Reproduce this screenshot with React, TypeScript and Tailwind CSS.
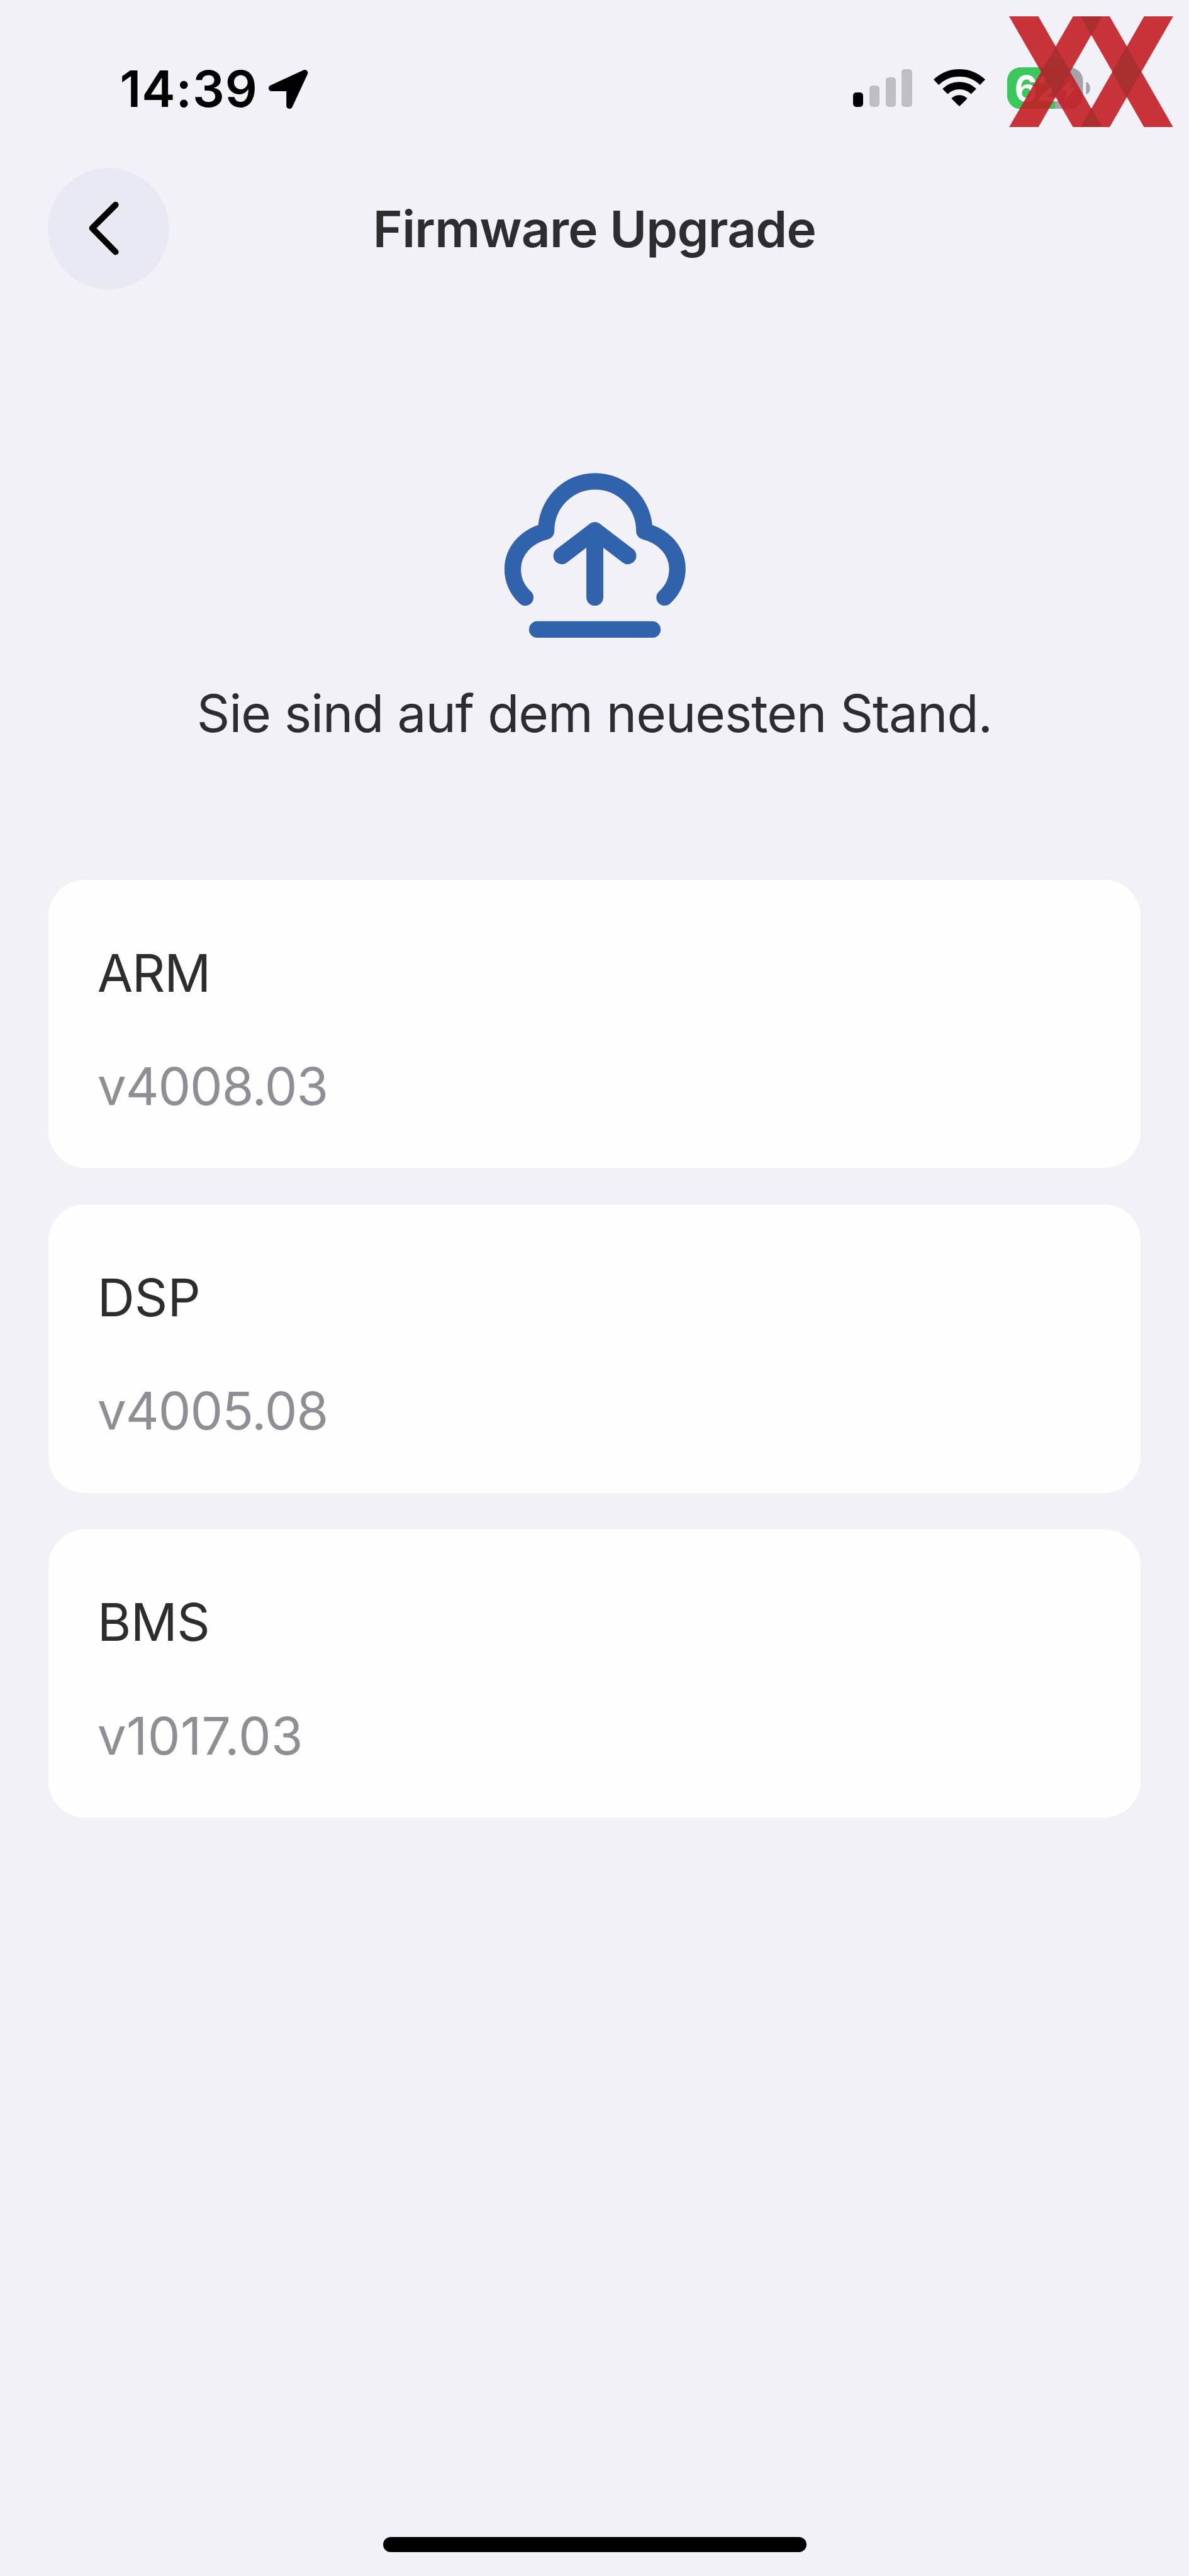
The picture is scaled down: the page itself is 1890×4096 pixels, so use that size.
type Module = {
  name: string;
  version: string;
  nameTracking: string;
  versionTracking: string;
};

const modules: Module[] = [
  { name: "ARM", version: "v4008.03", nameTracking: "tracking-[-1.4px]", versionTracking: "tracking-[-1.14px]" },
  { name: "DSP", version: "v4005.08", nameTracking: "tracking-[0px]", versionTracking: "tracking-[-0.96px]" },
  { name: "BMS", version: "v1017.03", nameTracking: "tracking-[-0.6px]", versionTracking: "tracking-[0.34px]" },
];

function LocationArrow() {
  return (
    <svg viewBox="0 0 190 189" className="mt-[19.5px] ml-[17.7px] h-[62px] w-[62.3px]">
      <path d="M15 89L175 15L101 174V89Z" fill="#000" stroke="#000" strokeWidth="30" strokeLinejoin="round" />
    </svg>
  );
}

function Signal() {
  return (
    <div className="mt-[19.2px] flex h-[59.8px] items-end gap-[9.4px]">
      <div className="h-[22.6px] w-[16.4px] rounded-[5px] bg-black" />
      <div className="h-[34.1px] w-[16.4px] rounded-[5px] bg-[#bebfc3]" />
      <div className="h-[46.9px] w-[16.4px] rounded-[5px] bg-[#bebfc3]" />
      <div className="h-[59.7px] w-[16.4px] rounded-[5px] bg-[#bebfc3]" />
    </div>
  );
}

function Wifi() {
  return (
    <svg viewBox="20 30 256 190" className="mt-[17.3px] ml-[33.4px] h-[62.3px] w-[84px]">
      <g fill="none" stroke="#000" strokeWidth="36">
        <path d="M35.5 99.5A162 162 0 0 1 260.5 99.5" />
        <path d="M78.5 144A100 100 0 0 1 217.5 144" />
      </g>
      <path
        d="M148 211L115 178A51 51 0 0 1 181 178Z"
        fill="#000"
        stroke="#000"
        strokeWidth="8"
        strokeLinejoin="round"
      />
    </svg>
  );
}

function Battery() {
  return (
    <svg viewBox="0 0 403 202" className="mt-[15.7px] ml-[34.2px] h-[66.3px] w-[132.2px]">
      <defs>
        <clipPath id="battery-body">
          <rect width="368" height="202" rx="66" />
        </clipPath>
      </defs>
      <g clipPath="url(#battery-body)">
        <rect width="368" height="202" fill="#a4a5aa" />
        <rect width="232" height="202" fill="#3ac75c" />
      </g>
      <path d="M382 70Q402 78 402 101T382 132Z" fill="#a4a5aa" />
      <text x="36" y="165" fontFamily="Inter, sans-serif" fontSize="170" fontWeight="700" fill="#fff">
        62
      </text>
      <path d="M312 58L262 112H292L280 160L332 98H302Z" fill="#fff" />
    </svg>
  );
}

function Watermark() {
  return (
    <svg
      viewBox="0 0 795 537"
      preserveAspectRatio="none"
      className="absolute top-[25.6px] left-[1603.9px] h-[176.3px] w-[260.9px]"
    >
      <g fill="#c41e25" opacity="0.9">
        <path d="M0 0H142L450 537H310Z" />
        <path d="M0 537H142L450 0H310Z" />
        <path d="M347 0H487L795 537H654Z" />
        <path d="M347 537H487L795 0H654Z" />
      </g>
      <g fill="#a62f30" opacity="0.9">
        <path d="M226 146L297 269L226 392L155 269Z" />
        <path d="M570 146L640 269L570 392L499 269Z" />
        <path d="M347 0H450L398 94Z" />
        <path d="M347 537H450L398 443Z" />
      </g>
    </svg>
  );
}

function CloudUpload() {
  return (
    <svg
      viewBox="0 0 1080 990"
      className="mt-[258.3px] ml-[767.8px] h-[324.8px] w-[354.4px]"
      fill="none"
      stroke="#3162ac"
      strokeWidth="80"
      strokeLinecap="round"
      strokeLinejoin="round"
    >
      <path d="M204 704A185 185 0 0 1 143 567C143 480 208 406 305 383A237 241 0 0 1 543 141A238 241 0 0 1 781 383C876 406 941 480 941 567A185 185 0 0 1 879 704" />
      <path d="M381 502L541 380L701 502" strokeWidth="82" />
      <path d="M541 380V703" strokeWidth="82" />
      <path d="M262 859.5H820" />
    </svg>
  );
}

function ModuleCard({ name, version, nameTracking, versionTracking }: Module) {
  return (
    <section className="h-[458.2px] rounded-[58px] bg-[#fefefe] pt-[98.5px] pl-[77.9px] text-[82px] leading-[100px]">
      <h2 className={`text-[#2c2d2f] ${nameTracking}`}>{name}</h2>
      <p className={`mt-[80.6px] text-[#8e8e96] ${versionTracking}`}>{version}</p>
    </section>
  );
}

export default function App() {
  return (
    <main className="relative flex h-[4096px] w-[1890px] flex-col overflow-hidden bg-[#f2f1f8] font-['Inter',sans-serif]">
      <div className="flex h-[267.3px] shrink-0 items-start pt-[91px] pl-[190.6px]">
        <span className="text-[80px] leading-[100px] font-semibold tracking-[0.9px] text-black">14:39</span>
        <LocationArrow />
        <div className="ml-auto flex items-start pr-[156.5px]">
          <Signal />
          <Wifi />
          <Battery />
        </div>
      </div>

      <header className="flex h-[193px] shrink-0 items-center px-[76px]">
        <button className="flex size-[193px] items-center justify-center rounded-full bg-[#e8e9f3]" aria-label="Zurück">
          <svg viewBox="0 0 588 588" className="size-full">
            <path
              d="M328 179L215 292L328 407"
              fill="none"
              stroke="#000"
              strokeWidth="30"
              strokeLinecap="round"
              strokeLinejoin="round"
            />
          </svg>
        </button>
        <h1 className="mr-[193px] flex-1 text-center text-[80px] leading-[100px] font-semibold tracking-[-0.73px] text-[#2c2d2f]">
          Firmware Upgrade
        </h1>
      </header>

      <CloudUpload />
      <p className="mt-[42px] text-center text-[82px] leading-[100px] tracking-[-1.065px] whitespace-nowrap text-[#2c2d2f]">
        Sie sind auf dem neuesten Stand.
      </p>

      <div className="mt-[213.8px] flex flex-col gap-[58px] pr-[77.4px] pl-[76.8px]">
        {modules.map((m) => (
          <ModuleCard key={m.name} {...m} />
        ))}
      </div>

      <div className="mt-auto mb-[37.6px] ml-[609.1px] h-[24.4px] w-[673px] rounded-full bg-black" />
      <Watermark />
    </main>
  );
}
